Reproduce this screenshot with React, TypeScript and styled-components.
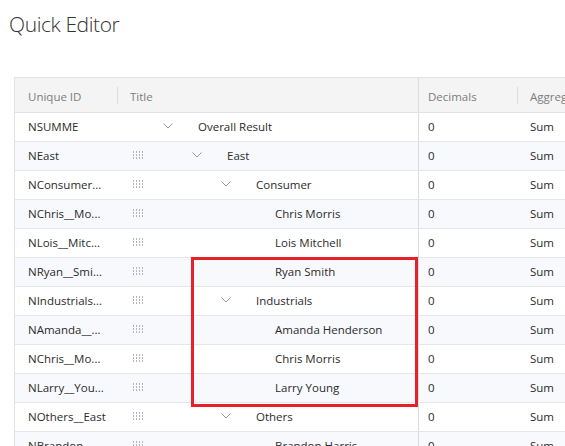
import React from "react";
import styled, { createGlobalStyle } from "styled-components";

const Global = createGlobalStyle`
  html, body { margin: 0; padding: 0; background: #fff; overflow: hidden; }
  body { font-family: "Segoe UI", "Open Sans", "Noto Sans", sans-serif; }
`;

const Page = styled.div`
  width: 565px;
  height: 446px;
  overflow: hidden;
  position: relative;
`;

const Heading = styled.h1`
  margin: 0;
  padding: 9px 0 0 9px;
  height: 68px;
  box-sizing: border-box;
  font-family: "Open Sans", sans-serif;
  font-weight: 300;
  font-size: 21px;
  line-height: 30px;
  color: #333;
  letter-spacing: -0.4px;
`;

const Table = styled.div`
  margin-left: 14px;
  margin-top: 9px;
  width: 640px;
  border-left: 1px solid #e3e3e3;
  border-top: 1px solid #e3e3e3;
  font-family: "Open Sans", sans-serif;
  font-size: 11.5px;
`;

const grid = `
  display: grid;
  grid-template-columns: 103px 300px 100px 136px;
`;

const HeaderRow = styled.div`
  ${grid}
  height: 34px;
  background: #f4f4f4;
  border-bottom: 1px solid #e2e2e2;
  color: #7d7d7d;
`;

const HeadCell = styled.div<{ $sep?: boolean; $border?: boolean; $pad: number }>`
  position: relative;
  display: flex;
  align-items: center;
  padding-left: ${(p) => p.$pad}px;
  padding-top: 2px;
  border-left: ${(p) => (p.$border ? "1px solid #dcdcdc" : "none")};
  white-space: nowrap;
  &::before {
    content: "";
    display: ${(p) => (p.$sep ? "block" : "none")};
    position: absolute;
    left: -1px;
    top: 9px;
    height: 17px;
    width: 1px;
    background: #dddddd;
  }
`;

const Row = styled.div<{ $alt: boolean }>`
  ${grid}
  height: 28px;
  border-bottom: 1px solid #e6e6e6;
  background: ${(p) => (p.$alt ? "#f8f9fc" : "#ffffff")};
  color: #2b2b2b;
`;

const Cell = styled.div<{ $pad: number; $border?: boolean }>`
  display: flex;
  align-items: center;
  padding-left: ${(p) => p.$pad}px;
  padding-bottom: 2px;
  overflow: hidden;
  white-space: nowrap;
  border-left: ${(p) => (p.$border ? "1px solid #dcdcdc" : "none")};
`;

const TitleCell = styled.div`
  display: flex;
  align-items: center;
  padding-left: 15px;
  padding-bottom: 2px;
  white-space: nowrap;
`;

const HandleSlot = styled.div`
  width: 25px;
  flex: none;
  display: flex;
  align-items: center;
`;

const Indent = styled.div<{ $level: number }>`
  width: ${(p) => p.$level * 29}px;
  flex: none;
`;

const Toggle = styled.div<{ $leaf: boolean }>`
  width: ${(p) => (p.$leaf ? 30 : 40)}px;
  flex: none;
  display: flex;
  align-items: center;
  padding-left: 5px;
  box-sizing: border-box;
`;

const Highlight = styled.div`
  position: absolute;
  left: 191px;
  top: 257px;
  width: 227px;
  height: 150px;
  box-sizing: border-box;
  border: 3px solid #e8202a;
  pointer-events: none;
`;

const Handle = () => (
  <svg width="11" height="9" viewBox="0 0 11 9">
    {[0, 3, 6, 9].map((x) =>
      [0, 3, 6].map((y) => (
        <rect key={`${x}-${y}`} x={x} y={y} width="1" height="2" fill="#b4b4bf" />
      ))
    )}
  </svg>
);

const Chevron = () => (
  <svg width="10" height="6" viewBox="0 0 10 6">
    <polyline points="0.5,0.5 5,5 9.5,0.5" fill="none" stroke="#9a9a9a" strokeWidth="1" />
  </svg>
);

type R = { id: string; title: string; level: number; leaf: boolean; handle: boolean };

const rows: R[] = [
  { id: "NSUMME", title: "Overall Result", level: 0, leaf: false, handle: false },
  { id: "NEast", title: "East", level: 1, leaf: false, handle: true },
  { id: "NConsumer...", title: "Consumer", level: 2, leaf: false, handle: true },
  { id: "NChris__Mo...", title: "Chris Morris", level: 3, leaf: true, handle: true },
  { id: "NLois__Mitc...", title: "Lois Mitchell", level: 3, leaf: true, handle: true },
  { id: "NRyan__Smi...", title: "Ryan Smith", level: 3, leaf: true, handle: true },
  { id: "NIndustrials...", title: "Industrials", level: 2, leaf: false, handle: true },
  { id: "NAmanda__...", title: "Amanda Henderson", level: 3, leaf: true, handle: true },
  { id: "NChris__Mo...", title: "Chris Morris", level: 3, leaf: true, handle: true },
  { id: "NLarry__You...", title: "Larry Young", level: 3, leaf: true, handle: true },
  { id: "NOthers__East", title: "Others", level: 2, leaf: false, handle: true },
  { id: "NBrandon...", title: "Brandon Harris", level: 3, leaf: true, handle: true },
];

export default function App() {
  return (
    <Page>
      <Global />
      <Heading>Quick Editor</Heading>
      <Table>
        <HeaderRow>
          <HeadCell $pad={13}>Unique ID</HeadCell>
          <HeadCell $pad={12} $sep>Title</HeadCell>
          <HeadCell $pad={9} $border>Decimals</HeadCell>
          <HeadCell $pad={12} $sep>Aggregation</HeadCell>
        </HeaderRow>
        {rows.map((r, i) => (
          <Row key={i} $alt={i % 2 === 1}>
            <Cell $pad={13}>{r.id}</Cell>
            <TitleCell>
              <HandleSlot>{r.handle && <Handle />}</HandleSlot>
              <Indent $level={r.level} />
              <Toggle $leaf={r.leaf}>{!r.leaf && <Chevron />}</Toggle>
              <span>{r.title}</span>
            </TitleCell>
            <Cell $pad={9} $border>0</Cell>
            <Cell $pad={12}>Sum</Cell>
          </Row>
        ))}
      </Table>
      <Highlight />
    </Page>
  );
}
